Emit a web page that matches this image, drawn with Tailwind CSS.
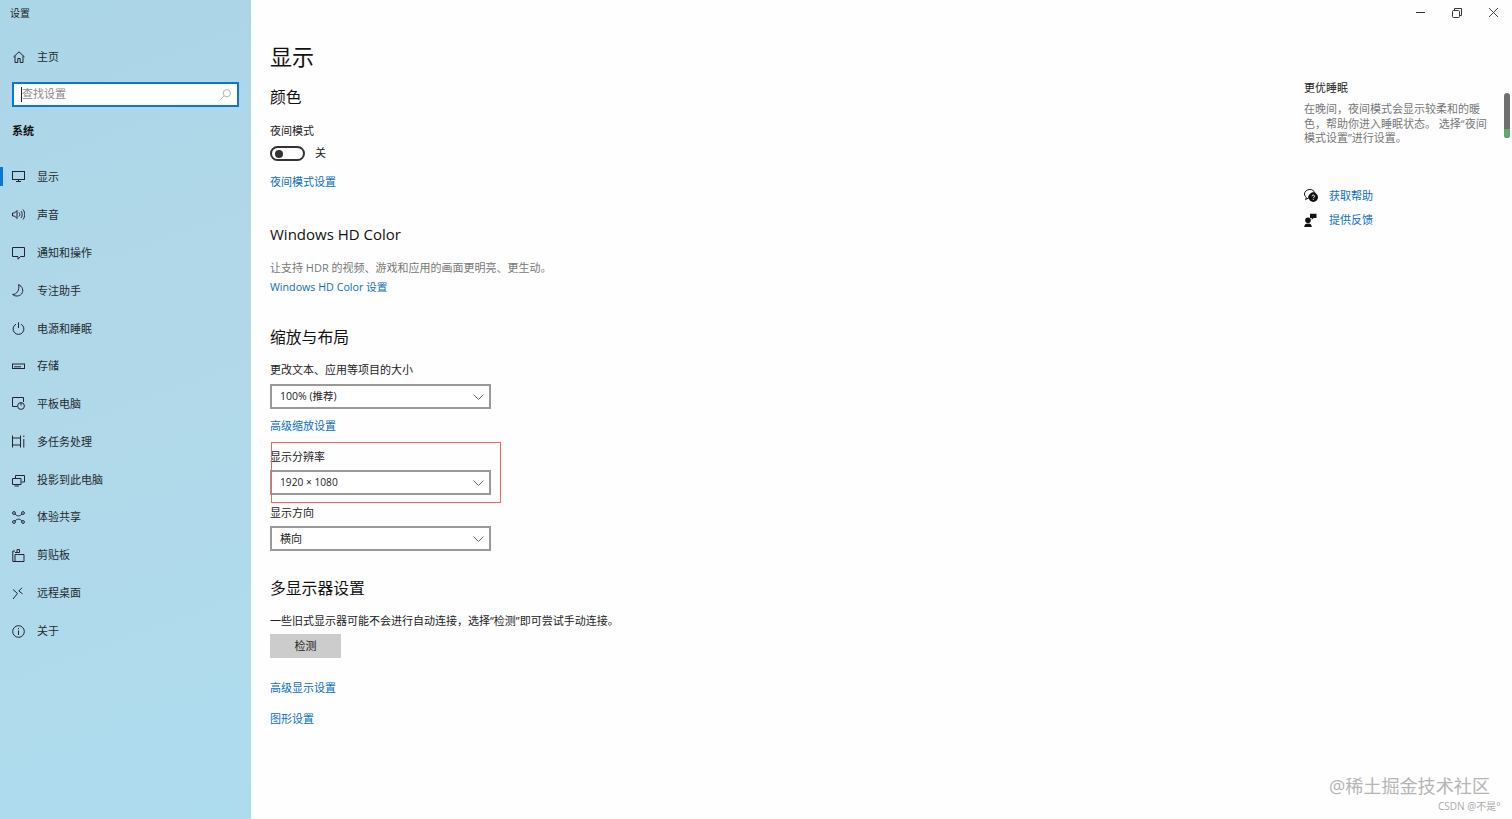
<!DOCTYPE html>
<html lang="zh-CN">
<head>
  <meta charset="UTF-8" />
  <title>设置</title>
  <script src="https://cdn.jsdelivr.net/npm/@tailwindcss/browser@4"></script>
</head>
<body class="bg-[#fefefe] font-['Open_Sans','Noto_Sans_CJK_SC',sans-serif] text-[11px] text-[#222] overflow-hidden">
<div class="relative flex h-[819px] w-[1512px] overflow-hidden">

  <!-- sidebar -->
  <aside class="w-[251px] h-full shrink-0 bg-[linear-gradient(160deg,#abd6e8_0%,#b1d8e9_45%,#addcee_100%)] text-[#1f2a30]">
    <div class="h-[26px] pl-[10px] flex items-center text-[10px] text-[#222]">设置</div>
    <div class="mt-[21px] h-[20px] flex items-center pl-[13px]">
      <svg class="w-[12px] h-[12px]" viewBox="0 0 12 12" fill="none" stroke="#223" stroke-width="1"><path d="M0.5 6 6 0.8 11.5 6M2 4.8V11.5H4.8V7.5H7.2V11.5H10V4.8"/></svg>
      <span class="ml-[12px]">主页</span>
    </div>
    <div class="mt-[15px] mx-[12px] w-[227px] h-[25px] bg-white border-2 border-[#0a78d0] flex items-center pl-[7px] pr-[6px]">
      <span class="w-px h-[15px] bg-[#222]"></span>
      <span class="text-[#8a8a8a]">查找设置</span>
      <svg class="ml-auto w-[11px] h-[11px]" viewBox="0 0 11 11" fill="none" stroke="#aaa" stroke-width="0.9"><circle cx="6.8" cy="4.2" r="3.6"/><path d="M4.2 6.8 0.6 10.4"/></svg>
    </div>
    <div class="mt-[14px] h-[20px] pl-[12px] flex items-center font-bold text-[#111]">系统</div>

    <nav class="mt-[17px]">
      <a class="relative h-[37.85px] flex items-center pl-[12px]">
        <span class="absolute left-0 top-[9px] w-[3px] h-[19px] bg-[#0a78d0]"></span>
        <svg class="w-[13px] h-[13px]" viewBox="0 0 13 13" fill="none" stroke="#223" stroke-width="1"><rect x="0.5" y="1.5" width="12" height="8"/><path d="M4 11.5H9M6.5 9.5V11.5"/></svg>
        <span class="ml-[12px]">显示</span>
      </a>
      <a class="h-[37.85px] flex items-center pl-[12px]">
        <svg class="w-[13px] h-[13px]" viewBox="0 0 13 13" fill="none" stroke="#223" stroke-width="1"><path d="M0.5 5H2.5L5 2.5V10.5L2.5 8H0.5ZM7 4.5C8 5.5 8 7.5 7 8.5M9 3C10.6 5 10.6 8 9 10M11 1.5C13.2 4.5 13.2 8.5 11 11.5"/></svg>
        <span class="ml-[12px]">声音</span>
      </a>
      <a class="h-[37.85px] flex items-center pl-[12px] pt-px">
        <svg class="w-[13px] h-[13px]" viewBox="0 0 13 13" fill="none" stroke="#223" stroke-width="1"><path d="M0.5 0.5H12.5V9.5H8.5L6 12.2V9.5H0.5Z"/></svg>
        <span class="ml-[12px]">通知和操作</span>
      </a>
      <a class="h-[37.85px] flex items-center pl-[12px] pt-px">
        <svg class="w-[13px] h-[13px]" viewBox="0 0 13 13" fill="none" stroke="#223" stroke-width="1"><path d="M6.5 0.6C10.5 2 12 7 9.5 10C7.5 12.4 3 12.8 0.6 10.4C4.5 10.8 8 6 6.5 0.6Z"/></svg>
        <span class="ml-[12px]">专注助手</span>
      </a>
      <a class="h-[37.85px] flex items-center pl-[12px] pt-px">
        <svg class="w-[13px] h-[13px]" viewBox="0 0 13 13" fill="none" stroke="#223" stroke-width="1"><path d="M4 2.2A5.4 5.4 0 1 0 9 2.2M6.5 0.3V6"/></svg>
        <span class="ml-[12px]">电源和睡眠</span>
      </a>
      <a class="h-[37.85px] flex items-center pl-[12px] pt-px">
        <svg class="w-[13px] h-[13px]" viewBox="0 0 13 13" fill="none" stroke="#223" stroke-width="1"><rect x="0.5" y="4" width="12" height="4.5"/><path d="M2 6.8H9"/></svg>
        <span class="ml-[12px]">存储</span>
      </a>
      <a class="h-[37.85px] flex items-center pl-[12px]">
        <svg class="w-[13px] h-[13px]" viewBox="0 0 13 13" fill="none" stroke="#223" stroke-width="1"><path d="M5 9.5H0.5V0.5H11.5V5"/><circle cx="9" cy="9" r="3.4"/><path d="M9 5.6V8.6"/></svg>
        <span class="ml-[12px]">平板电脑</span>
      </a>
      <a class="h-[37.85px] flex items-center pl-[12px]">
        <svg class="w-[13px] h-[13px]" viewBox="0 0 13 13" fill="none" stroke="#223" stroke-width="1"><path d="M0.5 0.5V12.5M8.5 0.5V12.5M0.5 3H8.5V10H0.5M11.8 0.5V2M11.8 4V12.5"/></svg>
        <span class="ml-[12px]">多任务处理</span>
      </a>
      <a class="h-[37.85px] flex items-center pl-[12px] pt-px">
        <svg class="w-[13px] h-[13px]" viewBox="0 0 13 13" fill="none" stroke="#223" stroke-width="1"><path d="M3.5 4V1.5H12.5V8H9.5M0.5 4.5H9V10.5H0.5ZM2.5 12H7"/></svg>
        <span class="ml-[12px]">投影到此电脑</span>
      </a>
      <a class="h-[37.85px] flex items-center pl-[12px]">
        <svg class="w-[13px] h-[13px]" viewBox="0 0 13 13" fill="none" stroke="#223" stroke-width="1"><circle cx="2" cy="2" r="1.4"/><circle cx="11" cy="2" r="1.4"/><circle cx="2" cy="11" r="1.4"/><circle cx="11" cy="11" r="1.4"/><path d="M3 3C5 5.5 8 5.5 10 3M3 10C5 7.5 8 7.5 10 10"/></svg>
        <span class="ml-[12px]">体验共享</span>
      </a>
      <a class="h-[37.85px] flex items-center pl-[12px]">
        <svg class="w-[13px] h-[13px]" viewBox="0 0 13 13" fill="none" stroke="#223" stroke-width="1"><path d="M3 2H0.8V12.5H3M3 3.5H7.5M5 3.5V0.6H7.5V3.5M5.5 5.5H12V12.5H3V5.5H5.5"/></svg>
        <span class="ml-[12px]">剪贴板</span>
      </a>
      <a class="h-[37.85px] flex items-center pl-[12px]">
        <svg class="w-[13px] h-[13px]" viewBox="0 0 13 13" fill="none" stroke="#223" stroke-width="1"><path d="M1 2.5 5.5 6.5 1 12M10 0.8 6.8 4 10.5 6.8"/></svg>
        <span class="ml-[12px]">远程桌面</span>
      </a>
      <a class="h-[37.85px] flex items-center pl-[12px]">
        <svg class="w-[13px] h-[13px]" viewBox="0 0 13 13" fill="none" stroke="#223" stroke-width="1"><circle cx="6.5" cy="6.5" r="5.8"/><path d="M6.5 5.5V10M6.5 3V4.2"/></svg>
        <span class="ml-[12px]">关于</span>
      </a>
    </nav>
  </aside>

  <!-- main column -->
  <main class="relative flex-1 pl-[19px]">
    <h1 class="mt-[41px] h-[30px] flex items-center text-[22px] text-[#111] font-normal">显示</h1>
    <h2 class="mt-[17px] h-[20px] flex items-center text-[15.8px] text-[#111]">颜色</h2>
    <div class="mt-[13px] h-[20px] flex items-center">夜间模式</div>
    <div class="mt-[5px] h-[15px] flex items-center">
      <span class="w-[35px] h-[15px] rounded-full border-2 border-[#333] flex items-center pl-[3px]"><span class="w-[8px] h-[8px] rounded-full bg-[#333]"></span></span>
      <span class="ml-[10px]">关</span>
    </div>
    <a class="mt-[11px] h-[20px] flex items-center text-[#0a6fc2]">夜间模式设置</a>

    <h2 class="mt-[32px] h-[20px] flex items-center text-[15px] text-[#111]">Windows HD Color</h2>
    <p class="mt-[15px] h-[18px] flex items-center text-[#777]">让支持 HDR 的视频、游戏和应用的画面更明亮、更生动。</p>
    <a class="mt-px h-[18px] flex items-center text-[10.7px] text-[#0a6fc2]">Windows HD Color 设置</a>

    <h2 class="mt-[32px] h-[20px] flex items-center text-[15.8px] text-[#111]">缩放与布局</h2>
    <div class="mt-[12px] h-[20px] flex items-center">更改文本、应用等项目的大小</div>
    <div class="mt-[4px] w-[221px] h-[25px] border-2 border-[#999] bg-white flex items-center pl-[8px] pr-[5px]">
      <span class="text-[10.5px]">100% (推荐)</span>
      <svg class="ml-auto w-[11px] h-[6px]" viewBox="0 0 11 6" fill="none" stroke="#555" stroke-width="0.9"><path d="M0.5 0.5 5.5 5.5 10.5 0.5"/></svg>
    </div>
    <a class="mt-[7px] h-[20px] flex items-center text-[#0a6fc2]">高级缩放设置</a>

    <div class="mt-[11px] h-[20px] flex items-center">显示分辨率</div>
    <div class="mt-[3px] w-[221px] h-[25px] border-2 border-[#999] bg-white flex items-center pl-[8px] pr-[5px] pt-px">
      <span class="text-[10.2px]">1920 × 1080</span>
      <svg class="ml-auto w-[11px] h-[6px]" viewBox="0 0 11 6" fill="none" stroke="#555" stroke-width="0.9"><path d="M0.5 0.5 5.5 5.5 10.5 0.5"/></svg>
    </div>
    <div class="mt-[8px] h-[20px] flex items-center">显示方向</div>
    <div class="mt-[3px] w-[221px] h-[25px] border-2 border-[#999] bg-white flex items-center pl-[8px] pr-[5px] pt-px">
      <span>横向</span>
      <svg class="ml-auto w-[11px] h-[6px]" viewBox="0 0 11 6" fill="none" stroke="#555" stroke-width="0.9"><path d="M0.5 0.5 5.5 5.5 10.5 0.5"/></svg>
    </div>

    <h2 class="mt-[28px] h-[20px] flex items-center text-[15.8px] text-[#111]">多显示器设置</h2>
    <p class="mt-[12px] h-[20px] flex items-center">一些旧式显示器可能不会进行自动连接，选择“检测”即可尝试手动连接。</p>
    <button class="mt-[3px] w-[71px] h-[24px] bg-[#cccccc] flex items-center justify-center pt-px">检测</button>
    <a class="mt-[20px] h-[20px] flex items-center text-[#0a6fc2]">高级显示设置</a>
    <a class="mt-[11px] h-[20px] flex items-center text-[#0a6fc2]">图形设置</a>

    <!-- annotation drawn over the screenshot -->
    <div class="absolute left-[20px] top-[442px] w-[230px] h-[61px] border border-[#e8686b]"></div>
  </main>

  <!-- related settings column -->
  <aside class="relative w-[208px] shrink-0">
    <div class="h-[25px] flex items-center justify-end pr-[14px] gap-[27px]">
      <svg class="w-[9px] h-[9px]" viewBox="0 0 9 9" fill="none" stroke="#333" stroke-width="1"><path d="M0 4.5H9"/></svg>
      <svg class="w-[10px] h-[10px]" viewBox="0 0 10 10" fill="none" stroke="#333" stroke-width="1"><rect x="0.5" y="2.5" width="7" height="7" rx="1"/><path d="M2.5 2.5V0.5H9.5V7.5H7.5"/></svg>
      <svg class="w-[9px] h-[9px]" viewBox="0 0 9 9" fill="none" stroke="#333" stroke-width="0.9"><path d="M0 0 9 9M9 0 0 9"/></svg>
    </div>
    <h3 class="mt-[53px] h-[20px] flex items-center text-[#222]">更优睡眠</h3>
    <p class="mt-[4px] w-[190px] leading-[14.5px] text-[#777]">在晚间，夜间模式会显示较柔和的暖色，帮助你进入睡眠状态。 选择“夜间模式设置”进行设置。</p>
    <div class="mt-[41px] h-[20px] flex items-center">
      <svg class="w-[14px] h-[14px] -mt-[2px]" viewBox="0 0 14 14"><path d="M6 0.5C2.8 0.5 0.5 2.5 0.5 5C0.5 6.4 1.2 7.5 2.3 8.3L1.6 10.5 4.2 9.2C4.3 9.2 4.5 9.3 4.7 9.3C4.5 6 7 3.6 10.8 3.6C10 1.8 8.2 0.5 6 0.5Z" fill="none" stroke="#111" stroke-width="1"/><circle cx="9.3" cy="8.3" r="4.7" fill="#111"/><path d="M8 7.2C8 5.6 10.6 5.6 10.6 7.2C10.6 8.3 9.3 8.2 9.3 9.3M9.3 10.2V11" fill="none" stroke="#fff" stroke-width="0.9"/></svg>
      <span class="ml-[11px] text-[#0a6fc2]">获取帮助</span>
    </div>
    <div class="mt-[4px] h-[20px] flex items-center">
      <svg class="w-[13px] h-[14px] -mt-[2px]" viewBox="0 0 13 14" fill="#111"><circle cx="4" cy="7.2" r="2.8"/><path d="M0.2 14C0.2 11.5 1.8 10.4 4 10.4S7.8 11.5 7.8 14Z"/><path d="M6 0.8H12.5V5H9.5L7.7 6.8V5H6Z"/></svg>
      <span class="ml-[12px] text-[#0a6fc2]">提供反馈</span>
    </div>

    <!-- scrollbar over the content edge -->
    <div class="absolute left-[200px] top-[93px] w-[6px] h-[45px] rounded-full bg-[#6f6f6f] overflow-hidden flex items-end">
      <div class="w-full h-[9px] bg-[#5fa872]"></div>
    </div>
  </aside>

  <!-- image watermarks -->
  <div class="absolute left-[1329px] top-[773px] text-[18.1px] text-[#b5b5b5] leading-[26px] whitespace-nowrap">@稀土掘金技术社区</div>
  <div class="absolute left-[1438px] top-[799px] text-[10px] text-[#aaaaaa] leading-[14px] whitespace-nowrap">CSDN @不是°</div>
</div>
</body>
</html>
